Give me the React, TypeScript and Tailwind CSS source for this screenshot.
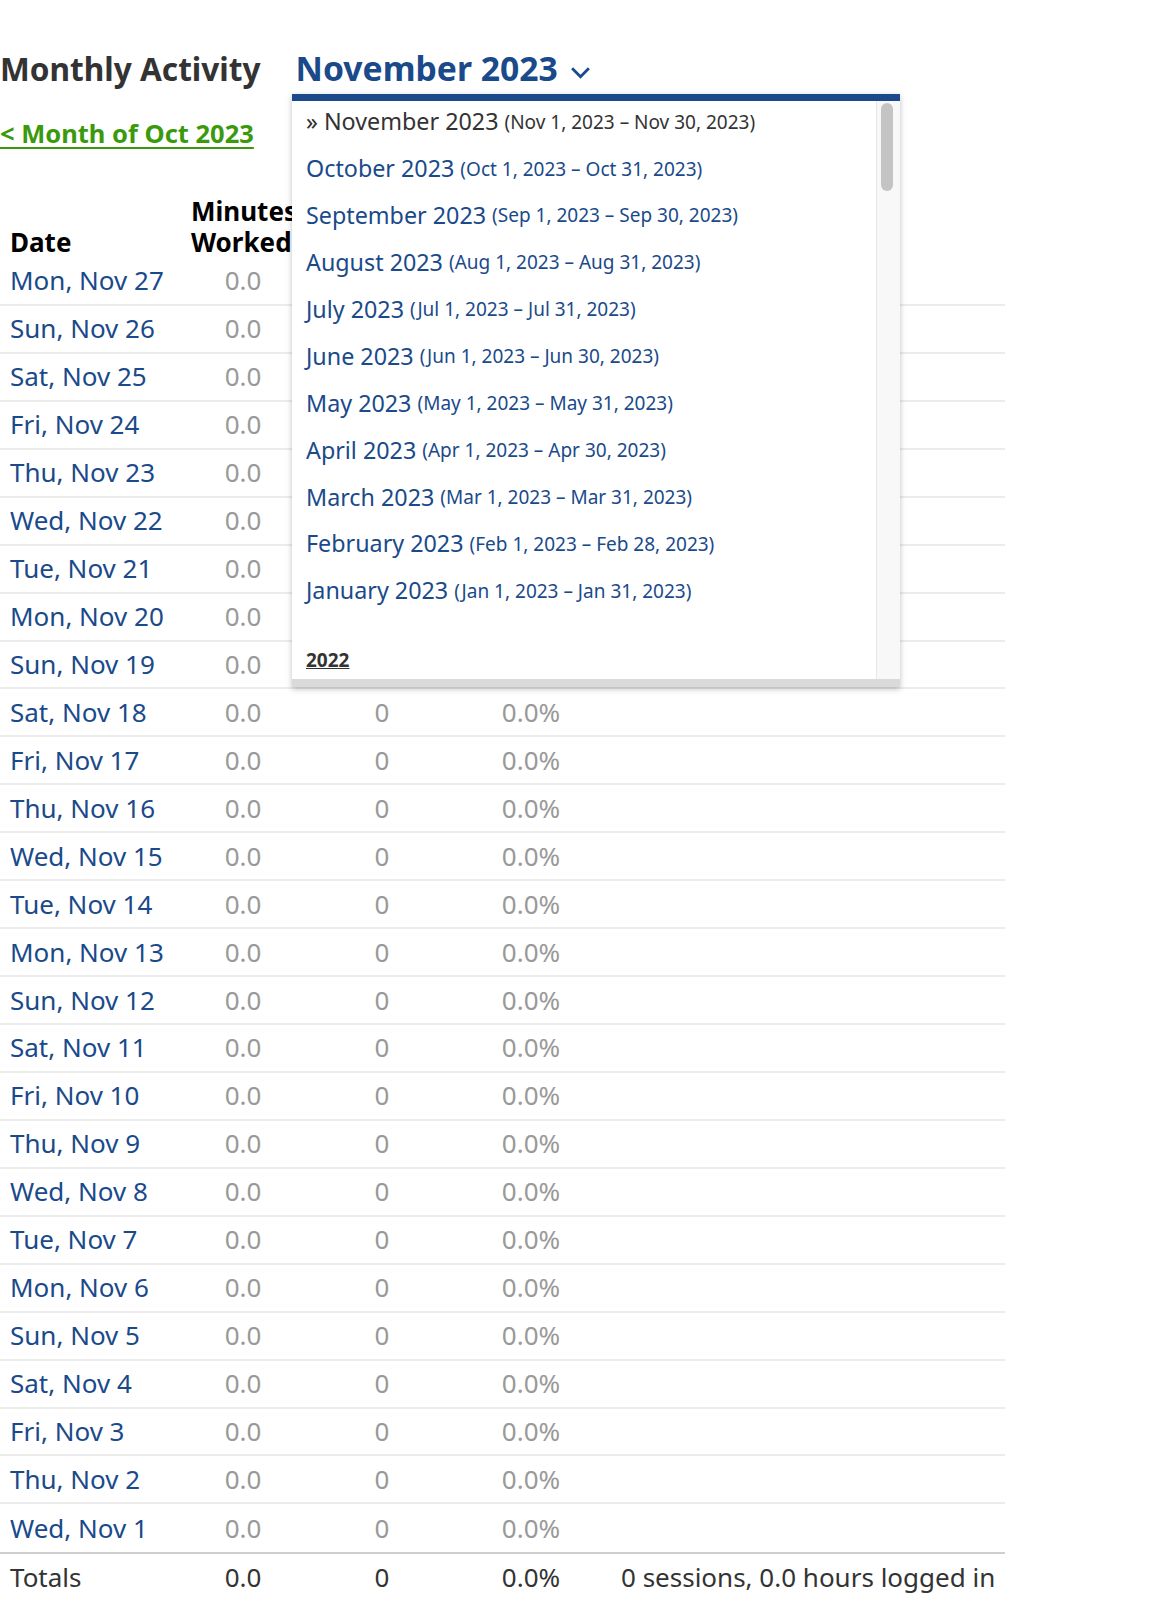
import React from "react";

const days = [
  "Mon, Nov 27", "Sun, Nov 26", "Sat, Nov 25", "Fri, Nov 24", "Thu, Nov 23", "Wed, Nov 22",
  "Tue, Nov 21", "Mon, Nov 20", "Sun, Nov 19", "Sat, Nov 18", "Fri, Nov 17", "Thu, Nov 16",
  "Wed, Nov 15", "Tue, Nov 14", "Mon, Nov 13", "Sun, Nov 12", "Sat, Nov 11", "Fri, Nov 10",
  "Thu, Nov 9", "Wed, Nov 8", "Tue, Nov 7", "Mon, Nov 6", "Sun, Nov 5", "Sat, Nov 4",
  "Fri, Nov 3", "Thu, Nov 2", "Wed, Nov 1",
];

const months = [
  ["October 2023", "(Oct 1, 2023 – Oct 31, 2023)"],
  ["September 2023", "(Sep 1, 2023 – Sep 30, 2023)"],
  ["August 2023", "(Aug 1, 2023 – Aug 31, 2023)"],
  ["July 2023", "(Jul 1, 2023 – Jul 31, 2023)"],
  ["June 2023", "(Jun 1, 2023 – Jun 30, 2023)"],
  ["May 2023", "(May 1, 2023 – May 31, 2023)"],
  ["April 2023", "(Apr 1, 2023 – Apr 30, 2023)"],
  ["March 2023", "(Mar 1, 2023 – Mar 31, 2023)"],
  ["February 2023", "(Feb 1, 2023 – Feb 28, 2023)"],
  ["January 2023", "(Jan 1, 2023 – Jan 31, 2023)"],
];

function MonthMenu() {
  return (
    <div className="absolute left-[292px] top-[94px] w-[608px] border-t-[7px] border-[#1a4a8a] bg-white shadow-[0_2px_6px_rgba(0,0,0,0.25)]">
      <div className="flex h-[578px]">
        <div className="flex-1 pl-[14px] -mt-[2.5px]">
          <div className="flex h-[46.9px] items-center gap-[6px] text-[#333]">
            <span className="text-[23.3px]">» November 2023</span>
            <span className="text-[19px]">(Nov 1, 2023 – Nov 30, 2023)</span>
          </div>
          {months.map(([m, r]) => (
            <div key={m} className="flex h-[46.9px] items-center gap-[6px] text-[#1a4a8a]">
              <span className="text-[23.3px]">{m}</span>
              <span className="text-[19px]">{r}</span>
            </div>
          ))}
          <div className="mt-[31.5px] text-[19px] font-bold text-[#333] underline leading-[28px]">2022</div>
        </div>
        <div className="w-[24px] border-l border-[#e6e6e6] bg-[#f8f8f8] pt-[2px] pl-[4px]">
          <div className="h-[88px] w-[12px] rounded-[6px] bg-[#c4c4c4]" />
        </div>
      </div>
      <div className="h-[8px] bg-[#dadada]" />
    </div>
  );
}

export default function App() {
  return (
    <div className="relative min-h-[1621px] bg-white font-['Noto_Sans',sans-serif] text-[#333]">
      <div className="flex items-baseline pt-[44px]">
        <h1 className="text-[31.6px] font-bold text-[#333] leading-[48px]">Monthly Activity</h1>
        <button className="ml-[35px] flex items-center gap-[12px] text-[33.7px] font-bold text-[#1a4a8a] leading-[48px]">
          November 2023
          <svg width="21" height="13" viewBox="0 0 20 12" className="mt-[8px]">
            <polyline points="2,2 10,10 18,2" fill="none" stroke="#1a4a8a" strokeWidth="2.6" />
          </svg>
        </button>
      </div>
      <div className="mt-[22px] h-[36px]">
        <a href="#" className="text-[25.5px] font-bold text-[#3a9a0c] underline decoration-2 underline-offset-[4px] leading-[36px]">
          &lt; Month of Oct 2023
        </a>
      </div>

      <div className="mt-[45px] w-[1005px]">
        <div className="flex h-[62px] items-end font-bold text-black text-[26px] leading-[31px]">
          <div className="w-[191px] pl-[10px]">Date</div>
          <div className="w-[104px]">Minutes Worked</div>
          <div className="w-[174px]" />
          <div className="w-[124px]" />
          <div className="pl-[28px]" />
        </div>
        {days.map((d, i) => (
          <div
            key={d}
            className={`flex h-[47.95px] items-center text-[26px] ${i < days.length - 1 ? "border-b-2 border-[#ececec]" : ""}`}
          >
            <div className="w-[191px] pl-[10px] text-[#1a4a8a]">{d}</div>
            <div className="w-[104px] text-center text-[#999]">0.0</div>
            <div className="w-[174px] text-center text-[#999]">0</div>
            <div className="w-[124px] text-center text-[#999]">0.0%</div>
            <div className="pl-[28px]" />
          </div>
        ))}
        <div className="flex h-[47.95px] items-center border-t-2 border-[#cfcfcf] text-[26px] text-[#333]">
          <div className="w-[191px] pl-[10px]">Totals</div>
          <div className="w-[104px] text-center">0.0</div>
          <div className="w-[174px] text-center">0</div>
          <div className="w-[124px] text-center">0.0%</div>
          <div className="pl-[28px]">0 sessions, 0.0 hours logged in</div>
        </div>
      </div>

      <MonthMenu />
    </div>
  );
}
